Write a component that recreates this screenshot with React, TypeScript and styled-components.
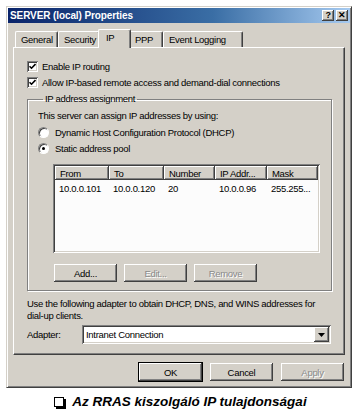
import styled, { createGlobalStyle } from "styled-components";

const GlobalStyle = createGlobalStyle`
  body {
    margin: 0;
    background: #fff;
    font-family: "Liberation Sans", Arial, sans-serif;
    font-size: 9.5px;
    letter-spacing: -0.3px;
    color: #000;
  }
`;

const Page = styled.div`
  width: 359px;
  height: 413px;
  box-sizing: border-box;
  padding: 6px 0 0 6px;
  display: flex;
  flex-direction: column;
`;

const Window = styled.div`
  width: 346px;
  height: 382px;
  box-sizing: border-box;
  background: #d4d0c8;
  border: 1px solid;
  border-color: #d4d0c8 #404040 #404040 #d4d0c8;
  box-shadow: inset 1px 1px #fff, inset -1px -1px #808080;
  padding: 1px;
  display: flex;
  flex-direction: column;
`;

const TitleBar = styled.div`
  height: 15px;
  background: linear-gradient(to right, #0a246a, #3a6ea5 60%, #a6caf0);
  display: flex;
  align-items: center;
  justify-content: space-between;
  padding: 0 2px;
`;

const Title = styled.span`
  color: #fff;
  font-weight: bold;
  font-size: 10px;
  letter-spacing: -0.1px;
`;

const TitleButtons = styled.div`
  display: flex;
  gap: 2px;
`;

const TitleButton = styled.span`
  width: 12px;
  height: 11px;
  box-sizing: border-box;
  background: #d4d0c8;
  box-shadow: inset -1px -1px #404040, inset 1px 1px #fff, inset -2px -2px #808080;
  display: flex;
  align-items: center;
  justify-content: center;
  font-weight: bold;
  font-size: 9px;
  line-height: 1;
`;

const TabRow = styled.div`
  display: flex;
  align-items: flex-end;
  height: 19px;
  margin-top: 5px;
  padding-left: 7px;
`;

const Tab = styled.div<{ $w: number; $active?: boolean }>`
  width: ${(p) => p.$w}px;
  height: ${(p) => (p.$active ? 19 : 16)}px;
  box-sizing: border-box;
  margin: ${(p) => (p.$active ? "0 -2px -1px" : "0")};
  position: relative;
  z-index: ${(p) => (p.$active ? 1 : 0)};
  background: #d4d0c8;
  border-top: 1px solid #fff;
  border-left: 1px solid #fff;
  border-right: 1px solid #404040;
  border-radius: 2px 2px 0 0;
  box-shadow: inset -1px 0 #808080;
  display: flex;
  align-items: ${(p) => (p.$active ? "flex-start" : "center")};
  padding: ${(p) => (p.$active ? "2px 0 0 7px" : "0 0 0 5px")};
  white-space: nowrap;
`;

const Panel = styled.div`
  margin: 0 5px;
  height: 308px;
  box-sizing: border-box;
  border: 1px solid;
  border-color: #fff #404040 #404040 #fff;
  box-shadow: inset -1px -1px #808080;
  padding: 12px 13px 0 13px;
  display: flex;
  flex-direction: column;
`;

const Row = styled.label<{ $gap?: number }>`
  display: flex;
  align-items: center;
  gap: 4px;
  height: 13px;
  margin-top: ${(p) => p.$gap ?? 0}px;
`;

const Box = styled.span`
  width: 11px;
  height: 11px;
  box-sizing: border-box;
  background: #fff;
  box-shadow: inset 1px 1px #808080, inset -1px -1px #fff, inset 2px 2px #404040,
    inset -2px -2px #d4d0c8;
  display: flex;
  align-items: center;
  justify-content: center;
`;

const Radio = styled.span<{ $on?: boolean }>`
  width: 11px;
  height: 11px;
  box-sizing: border-box;
  border-radius: 50%;
  background: #fff;
  border: 1px solid;
  border-color: #808080 #fff #fff #808080;
  box-shadow: inset 1px 1px #404040;
  display: flex;
  align-items: center;
  justify-content: center;
  &::after {
    content: "";
    width: 3px;
    height: 3px;
    border-radius: 50%;
    background: ${(p) => (p.$on ? "#000" : "transparent")};
  }
`;

const RadioText = styled.span`
  margin-left: 2px;
`;

const Group = styled.fieldset`
  margin: 4px 0 0;
  padding: 0 11px 7px 10px;
  border: 1px solid #808080;
  box-shadow: 1px 1px #fff, inset 1px 1px #fff;
  display: flex;
  flex-direction: column;
`;

const Legend = styled.legend`
  margin-left: 5px;
  padding: 0 2px;
  line-height: 12px;
`;

const Line = styled.div<{ $gap?: number }>`
  line-height: 12px;
  margin-top: ${(p) => p.$gap ?? 0}px;
`;

const List = styled.div`
  margin: 9px 0 0 15px;
  width: 267px;
  height: 89px;
  box-sizing: border-box;
  background: #fcfcfc;
  padding: 2px;
  box-shadow: inset 1px 1px #808080, inset -1px -1px #fff, inset 2px 2px #404040,
    inset -2px -2px #d4d0c8;
`;

const Header = styled.div`
  display: flex;
  height: 14px;
`;

const HeadCell = styled.div<{ $w: number }>`
  width: ${(p) => p.$w}px;
  box-sizing: border-box;
  background: #d4d0c8;
  box-shadow: inset -1px -1px #404040, inset 1px 1px #fff, inset -2px -2px #808080;
  padding-left: 5px;
  display: flex;
  align-items: center;
  white-space: nowrap;
`;

const DataRow = styled.div`
  display: flex;
  height: 13px;
  margin-top: 2px;
`;

const Cell = styled.div<{ $w: number }>`
  width: ${(p) => p.$w}px;
  padding-left: 4px;
  box-sizing: border-box;
  line-height: 13px;
  white-space: nowrap;
`;

const ButtonRow = styled.div<{ $indent?: number; $gap?: number }>`
  display: flex;
  gap: 5px;
  margin-left: ${(p) => p.$indent ?? 0}px;
  margin-top: ${(p) => p.$gap ?? 0}px;
`;

const Button = styled.div<{ $disabled?: boolean; $default?: boolean }>`
  width: 65px;
  height: 20px;
  box-sizing: border-box;
  background: #d4d0c8;
  border: 1px solid ${(p) => (p.$default ? "#000" : "transparent")};
  box-shadow: inset -1px -1px #404040, inset 1px 1px #fff, inset -2px -2px #808080;
  display: flex;
  align-items: center;
  justify-content: center;
  color: ${(p) => (p.$disabled ? "#8a8a8a" : "#000")};
  text-shadow: ${(p) => (p.$disabled ? "1px 1px #fff" : "none")};
`;

const AdapterRow = styled.div`
  display: flex;
  align-items: center;
  margin-top: 3px;
`;

const AdapterLabel = styled.span`
  width: 55px;
`;

const Combo = styled.div`
  flex: 1;
  height: 19px;
  box-sizing: border-box;
  background: #fff;
  padding: 2px;
  box-shadow: inset 1px 1px #808080, inset -1px -1px #fff, inset 2px 2px #404040,
    inset -2px -2px #d4d0c8;
  display: flex;
  align-items: center;
`;

const ComboText = styled.span`
  flex: 1;
  padding-left: 2px;
`;

const DropButton = styled.span`
  width: 15px;
  height: 15px;
  box-sizing: border-box;
  background: #d4d0c8;
  box-shadow: inset -1px -1px #404040, inset 1px 1px #fff, inset -2px -2px #808080;
  display: flex;
  align-items: center;
  justify-content: center;
`;

const Footer = styled.div`
  display: flex;
  justify-content: flex-end;
  gap: 6px;
  margin: 7px 5px 0 0;
`;

const Caption = styled.div`
  margin-top: 6px;
  display: flex;
  justify-content: center;
  align-items: center;
  gap: 6px;
  font-weight: bold;
  font-style: italic;
  font-size: 13.5px;
  letter-spacing: 0;
  padding-right: 4px;
`;

const CaptionMark = styled.span`
  width: 8px;
  height: 8px;
  border: 1.5px solid #000;
  box-shadow: 2px 2px #000;
  margin-right: 2px;
`;

const cols = [54, 55, 51, 52, 51];

function Check() {
  return (
    <svg width="7" height="7" viewBox="0 0 7 7">
      <path d="M0.5 3.2 L2.5 5.2 L6.5 1" stroke="#000" strokeWidth="1.6" fill="none" />
    </svg>
  );
}

export default function App() {
  return (
    <>
      <GlobalStyle />
      <Page>
        <Window>
          <TitleBar>
            <Title>SERVER (local) Properties</Title>
            <TitleButtons>
              <TitleButton>?</TitleButton>
              <TitleButton>✕</TitleButton>
            </TitleButtons>
          </TitleBar>
          <TabRow>
            <Tab $w={43}>General</Tab>
            <Tab $w={42}>Security</Tab>
            <Tab $w={33} $active>
              IP
            </Tab>
            <Tab $w={34}>PPP</Tab>
            <Tab $w={80}>Event Logging</Tab>
          </TabRow>
          <Panel>
            <Row>
              <Box>
                <Check />
              </Box>
              Enable IP routing
            </Row>
            <Row $gap={3}>
              <Box>
                <Check />
              </Box>
              Allow IP-based remote access and demand-dial connections
            </Row>
            <Group>
              <Legend>IP address assignment</Legend>
              <Line $gap={5}>This server can assign IP addresses by using:</Line>
              <Row $gap={4}>
                <Radio />
                <RadioText>Dynamic Host Configuration Protocol (DHCP)</RadioText>
              </Row>
              <Row $gap={3}>
                <Radio $on />
                <RadioText>Static address pool</RadioText>
              </Row>
              <List>
                <Header>
                  {["From", "To", "Number", "IP Addr...", "Mask"].map((h, i) => (
                    <HeadCell key={h} $w={cols[i]}>
                      {h}
                    </HeadCell>
                  ))}
                </Header>
                <DataRow>
                  {["10.0.0.101", "10.0.0.120", "20", "10.0.0.96", "255.255..."].map((c, i) => (
                    <Cell key={i} $w={cols[i]}>
                      {c}
                    </Cell>
                  ))}
                </DataRow>
              </List>
              <ButtonRow $indent={15} $gap={10}>
                <Button>Add...</Button>
                <Button $disabled>Edit...</Button>
                <Button $disabled>Remove</Button>
              </ButtonRow>
            </Group>
            <Line $gap={7}>
              Use the following adapter to obtain DHCP, DNS, and WINS addresses for dial-up clients.
            </Line>
            <AdapterRow>
              <AdapterLabel>Adapter:</AdapterLabel>
              <Combo>
                <ComboText>Intranet Connection</ComboText>
                <DropButton>
                  <svg width="7" height="4" viewBox="0 0 7 4">
                    <path d="M0 0 H7 L3.5 4 Z" fill="#000" />
                  </svg>
                </DropButton>
              </Combo>
            </AdapterRow>
          </Panel>
          <Footer>
            <Button $default>OK</Button>
            <Button>Cancel</Button>
            <Button $disabled>Apply</Button>
          </Footer>
        </Window>
        <Caption>
          <CaptionMark />
          Az RRAS kiszolgáló IP tulajdonságai
        </Caption>
      </Page>
    </>
  );
}
